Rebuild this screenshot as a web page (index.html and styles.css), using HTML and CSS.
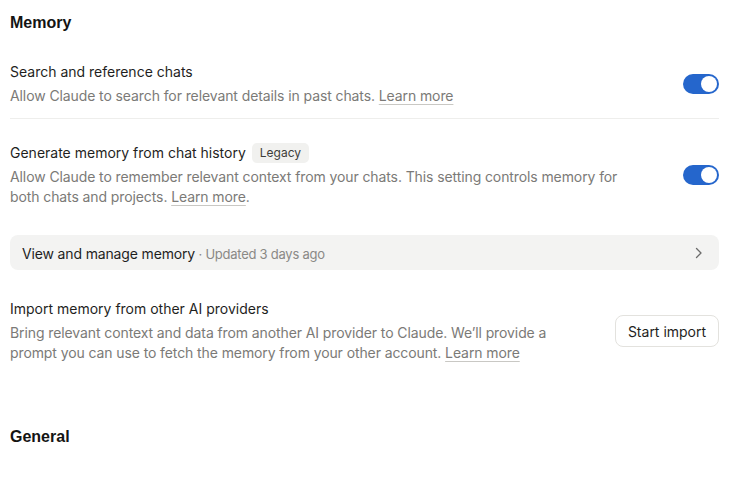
FILE: index.html
```html
<!DOCTYPE html>
<html>
<head>
<meta charset="utf-8">
<link rel="stylesheet" href="styles.css">
</head>
<body>
<main class="page">
  <h2 class="section-title">Memory</h2>

  <div class="setting first">
    <div class="setting-text">
      <div class="setting-title">Search and reference chats</div>
      <div class="setting-desc">Allow Claude to search for relevant details in past chats. <a class="link" href="#">Learn more</a></div>
    </div>
    <div class="toggle"><span class="knob"></span></div>
  </div>

  <div class="divider"></div>

  <div class="setting second">
    <div class="setting-text">
      <div class="setting-title">Generate memory from chat history <span class="badge">Legacy</span></div>
      <div class="setting-desc">Allow Claude to remember relevant context from your chats. This setting controls memory for both chats and projects. <a class="link" href="#">Learn more</a>.</div>
    </div>
    <div class="toggle"><span class="knob"></span></div>
  </div>

  <div class="manage">
    <div class="manage-text"><span class="manage-title">View and manage memory</span><span class="manage-meta"> · Updated 3 days ago</span></div>
    <svg class="chevron" width="8" height="12" viewBox="0 0 8 12"><path d="M1.5 1.5 L6 6 L1.5 10.5" fill="none" stroke="#6b6b6b" stroke-width="1.3" stroke-linecap="round" stroke-linejoin="round"/></svg>
  </div>

  <div class="setting import">
    <div class="setting-text">
      <div class="setting-title">Import memory from other AI providers</div>
      <div class="setting-desc">Bring relevant context and data from another AI provider to Claude. We’ll provide a prompt you can use to fetch the memory from your other account. <a class="link" href="#">Learn more</a></div>
    </div>
    <button class="btn">Start import</button>
  </div>

  <h2 class="section-title general">General</h2>
</main>
</body>
</html>
```
FILE: styles.css
```css
* { box-sizing: border-box; }
html, body { margin: 0; padding: 0; background: #ffffff; }
body {
  font-family: Inter, "Noto Sans", sans-serif;
  color: #1f1f1e;
  -webkit-font-smoothing: antialiased;
}
.page {
  width: 709px;
  margin-left: 10px;
  padding-top: 13px;
}
.section-title {
  margin: 0;
  font-family: "Liberation Sans", Arial, sans-serif;
  font-size: 16px;
  font-weight: 700;
  line-height: 20px;
  color: #141413;
}
.setting {
  display: flex;
  align-items: center;
  gap: 40px;
}
.setting.first { margin-top: 29px; padding-bottom: 12px; }
.setting.second { padding-top: 24px; }
.setting.import { margin-top: 29px; }
.setting-text { flex: 1; min-width: 0; }
.setting-title {
  font-size: 14px;
  line-height: 20px;
  color: #1f1f1e;
  display: flex;
  align-items: center;
  gap: 6px;
  margin-bottom: 4px;
}
.setting-desc {
  font-size: 14px;
  line-height: 20px;
  color: #7b7a77;
  letter-spacing: -0.1px;
}
.link {
  color: #7b7a77;
  text-decoration: underline;
  text-decoration-color: #c9c8c4;
  text-underline-offset: 3px;
  text-decoration-thickness: 1px;
}
.badge {
  display: inline-flex;
  align-items: center;
  height: 20px;
  padding: 0 8px;
  border-radius: 5px;
  background: #f1f1ef;
  font-size: 12px;
  color: #3d3d3a;
}
.toggle {
  width: 36px;
  height: 20px;
  border-radius: 10px;
  background: #2566cc;
  display: flex;
  justify-content: flex-end;
  align-items: center;
  padding: 2px;
  flex-shrink: 0;
}
.knob {
  width: 16px;
  height: 16px;
  border-radius: 50%;
  background: #ffffff;
}
.divider {
  height: 1px;
  background: #eeeeec;
}
.manage {
  margin-top: 28px;
  height: 35px;
  border-radius: 8px;
  background: #f3f3f2;
  display: flex;
  align-items: center;
  justify-content: space-between;
  padding: 0 16px 0 12px;
}
.manage-title { font-size: 14px; color: #1f1f1e; letter-spacing: -0.15px; }
.manage-meta { font-size: 13px; color: #8a8986; letter-spacing: -0.25px; }
.chevron { display: block; }
.btn {
  flex-shrink: 0;
  width: 104px;
  height: 32px;
  border: 1px solid #e3e2de;
  border-radius: 8px;
  background: #ffffff;
  font-family: Inter, "Noto Sans", sans-serif;
  font-size: 14px;
  color: #1f1f1e;
  padding: 0;
}
.general { margin-top: 64px; }
```
